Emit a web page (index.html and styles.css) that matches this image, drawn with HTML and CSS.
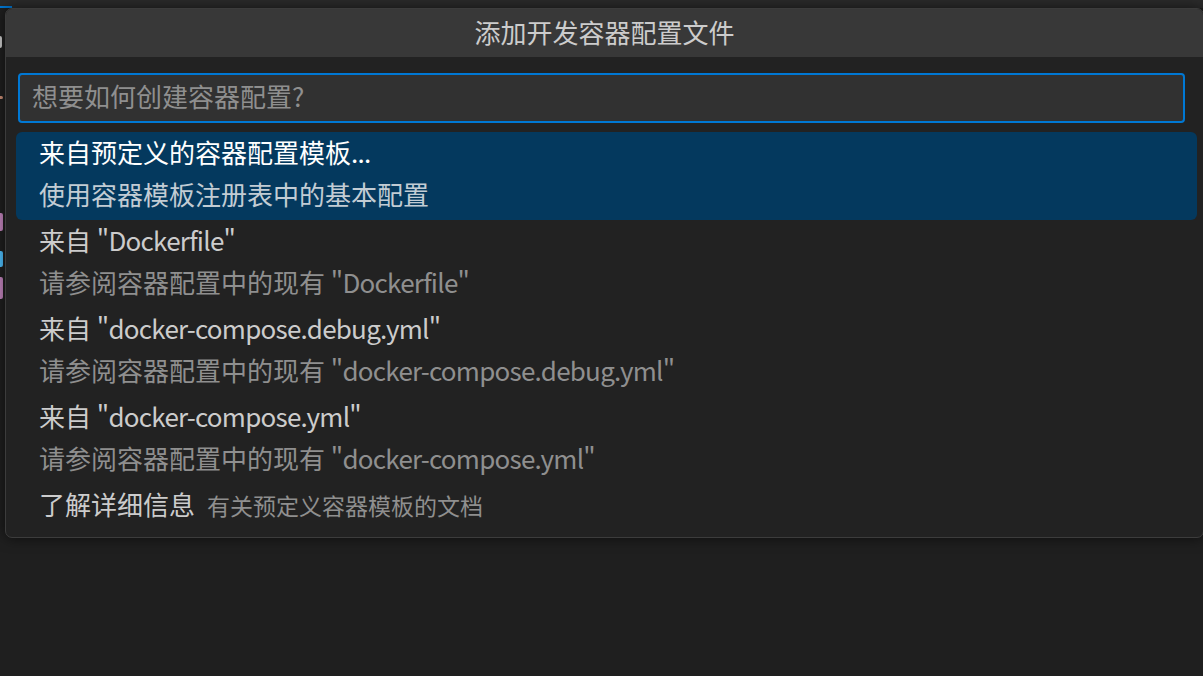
FILE: index.html
```html
<!DOCTYPE html>
<html lang="zh-CN">
<head>
<meta charset="utf-8">
<title>添加开发容器配置文件</title>
<link rel="stylesheet" href="styles.css">
</head>
<body>
<div class="topbar"><div class="tab-indicator"></div></div>
<div class="editor">
  <div class="gutter">
    <div class="frag f1"></div>
    <div class="frag f2"></div>
    <div class="frag f3"></div>
    <div class="frag f4"></div>
    <div class="frag f5"></div>
  </div>
</div>

<div class="quick-input">
  <div class="qi-title">添加开发容器配置文件</div>
  <div class="qi-body">
    <div class="qi-input">想要如何创建容器配置?</div>
    <div class="qi-list">
      <div class="qi-row selected">
        <div class="label">来自预定义的容器配置模板<span class="lat">...</span></div>
        <div class="detail">使用容器模板注册表中的基本配置</div>
      </div>
      <div class="qi-row">
        <div class="label">来自 <span class="lat">"Dockerfile"</span></div>
        <div class="detail">请参阅容器配置中的现有 <span class="lat">"Dockerfile"</span></div>
      </div>
      <div class="qi-row">
        <div class="label">来自 <span class="lat">"docker-compose.debug.yml"</span></div>
        <div class="detail">请参阅容器配置中的现有 <span class="lat">"docker-compose.debug.yml"</span></div>
      </div>
      <div class="qi-row">
        <div class="label">来自 <span class="lat">"docker-compose.yml"</span></div>
        <div class="detail">请参阅容器配置中的现有 <span class="lat">"docker-compose.yml"</span></div>
      </div>
      <div class="qi-row">
        <div class="label">了解详细信息<span class="desc">有关预定义容器模板的文档</span></div>
      </div>
    </div>
  </div>
</div>
</body>
</html>
```

FILE: styles.css
```css
html, body {
  margin: 0;
  padding: 0;
}
body {
  width: 1203px;
  height: 676px;
  overflow: hidden;
  background: #1f1f1f;
  font-family: "Noto Sans CJK SC", "Noto Sans", sans-serif;
  position: relative;
}
.topbar {
  height: 8px;
  background: #2b2b2b;
  position: relative;
}
.tab-indicator {
  position: absolute;
  left: 0;
  bottom: 0;
  width: 12px;
  height: 2px;
  background: #0078d4;
}
.editor {
  height: 668px;
  display: flex;
}
.gutter {
  width: 5px;
  display: flex;
  flex-direction: column;
  padding-top: 28px;
}
.frag {
  width: 3px;
  border-radius: 0 2px 2px 0;
}
.f1 { height: 12px; background: #cccccc; width: 2px; }
.f2 { height: 3px; margin-top: 48px; background: #ce9178; }
.f3 { height: 18px; margin-top: 114px; background: #c586c0; }
.f4 { height: 16px; margin-top: 20px; background: #4fc1ff; }
.f5 { height: 22px; margin-top: 10px; background: #c586c0; }

.quick-input {
  position: absolute;
  left: 5px;
  top: 8px;
  width: 1197px;
  background: #222222;
  border: 1px solid #3c3c3c;
  border-radius: 7px;
  box-shadow: 0 0 14px rgba(0, 0, 0, 0.6);
  overflow: hidden;
  color: #cccccc;
}
.qi-title {
  height: 44px;
  padding-bottom: 4px;
  background: #383838;
  display: flex;
  align-items: center;
  justify-content: center;
  font-size: 26px;
  color: #cccccc;
}
.qi-body {
  padding: 16px 6px 9px 10px;
}
.qi-input {
  margin: 0 12px 0 2px;
  height: 42px;
  padding-bottom: 4px;
  border: 2px solid #0078d4;
  border-radius: 4px;
  background: #313131;
  color: #8f8f8f;
  font-size: 26px;
  line-height: 42px;
  padding-left: 12px;
}
.qi-list {
  margin-top: 9px;
  display: flex;
  flex-direction: column;
}
.qi-row {
  padding-left: 23px;
  border-radius: 6px;
  font-size: 26px;
}
.qi-row .label,
.qi-row .detail {
  white-space: nowrap;
}
.qi-row .label {
  height: 40px;
  line-height: 40px;
  padding-bottom: 4px;
  color: #cccccc;
}
.qi-row .detail {
  height: 36px;
  line-height: 36px;
  padding-bottom: 8px;
  color: #8f8f8f;
}
.lat {
  letter-spacing: -0.75px;
}
.qi-row.selected { background: #04395e; }
.qi-row.selected .label { color: #ffffff; }
.qi-row.selected .detail { color: #c2ccd4; }
.desc {
  font-size: 23px;
  color: #8f8f8f;
  margin-left: 12px;
}
```
